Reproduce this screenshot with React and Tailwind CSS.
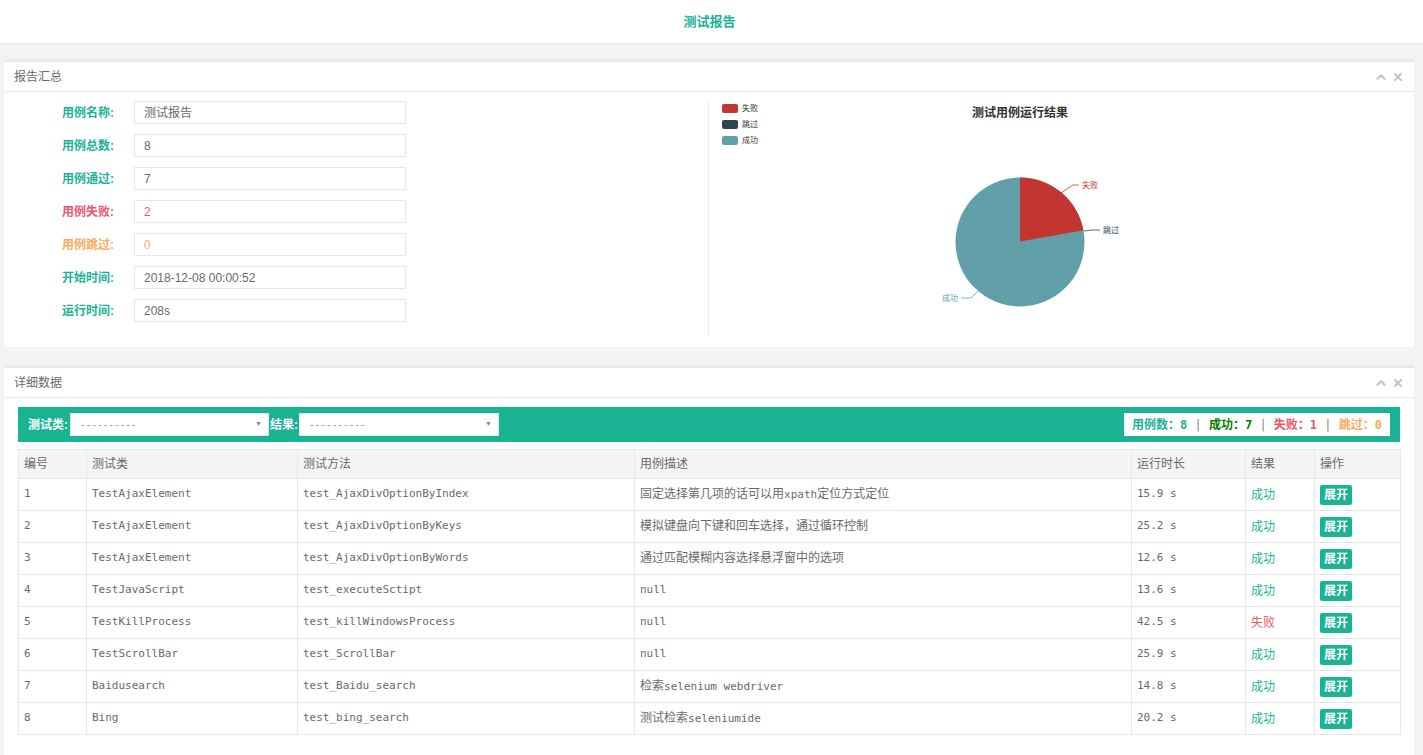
import { ChevronUp, X } from 'lucide-react';

const rows = [
  ['1', 'TestAjaxElement', 'test_AjaxDivOptionByIndex', '固定选择第几项的话可以用xpath定位方式定位', '15.9 s', '成功'],
  ['2', 'TestAjaxElement', 'test_AjaxDivOptionByKeys', '模拟键盘向下键和回车选择，通过循环控制', '25.2 s', '成功'],
  ['3', 'TestAjaxElement', 'test_AjaxDivOptionByWords', '通过匹配模糊内容选择悬浮窗中的选项', '12.6 s', '成功'],
  ['4', 'TestJavaScript', 'test_executeSctipt', 'null', '13.6 s', '成功'],
  ['5', 'TestKillProcess', 'test_killWindowsProcess', 'null', '42.5 s', '失败'],
  ['6', 'TestScrollBar', 'test_ScrollBar', 'null', '25.9 s', '成功'],
  ['7', 'Baidusearch', 'test_Baidu_search', '检索selenium webdriver', '14.8 s', '成功'],
  ['8', 'Bing', 'test_bing_search', '测试检索seleniumide', '20.2 s', '成功'],
];

const fields = [
  ['用例名称:', '测试报告', 'text-[#1ab394]', 'text-[#676a6c]'],
  ['用例总数:', '8', 'text-[#1ab394]', 'text-[#676a6c]'],
  ['用例通过:', '7', 'text-[#1ab394]', 'text-[#676a6c]'],
  ['用例失败:', '2', 'text-[#ed5565]', 'text-[#ed5565]'],
  ['用例跳过:', '0', 'text-[#f8ac59]', 'text-[#f8ac59]'],
  ['开始时间:', '2018-12-08 00:00:52', 'text-[#1ab394]', 'text-[#676a6c]'],
  ['运行时间:', '208s', 'text-[#1ab394]', 'text-[#676a6c]'],
];

const sans = "font-['Liberation_Sans','Noto_Sans_CJK_SC',sans-serif]";
const mono = "font-['DejaVu_Sans_Mono','Noto_Sans_CJK_SC',monospace]";

// CJK runs at 12px, latin runs at 11px mono
function Desc({ text }) {
  return text.split(/([\u4e00-\u9fff\uff0c]+)/).filter(Boolean).map((part, i) =>
    /[\u4e00-\u9fff\uff0c]/.test(part)
      ? <span key={i} className="text-[12px]">{part}</span>
      : <span key={i} className="text-[11px]">{part}</span>
  );
}

function PanelHeader({ title }) {
  return (
    <div className="h-[30px] flex items-center justify-between px-[10px] border-b border-[#e7eaec]">
      <span className="text-[12px] text-[#676a6c]">{title}</span>
      <div className="flex items-center gap-[4px] text-[#c4c4c4]">
        <ChevronUp size={14} strokeWidth={4} />
        <X size={12} strokeWidth={4} />
      </div>
    </div>
  );
}

function PieChart() {
  // 2 fail / 0 skip / 7 pass -> fail slice 80deg
  return (
    <svg width="705" height="245" className="block">
      <g transform="translate(0,-5)">
        {[['#c23531', '失败'], ['#2f4554', '跳过'], ['#61a0a8', '成功']].map(([c, t], i) => (
          <g key={t}>
            <rect x="13" y={8 + i * 16} width="16" height="9" rx="2" fill={c} />
            <text x="33" y={15 + i * 16} fontSize="8" fill="#333">{t}</text>
          </g>
        ))}
        <text x="311" y="21" fontSize="12" fontWeight="bold" fill="#333" textAnchor="middle">测试用例运行结果</text>
        <circle cx="311" cy="146" r="64.5" fill="#61a0a8" />
        <path d="M311 146 L311 81.5 A64.5 64.5 0 0 1 374.5 134.8 Z" fill="#c23531" />
        <line x1="311" y1="146" x2="374.5" y2="134.8" stroke="#61a0a8" strokeWidth="1" />
        <polyline points="352,97 364,89 370,89" fill="none" stroke="#c23531" strokeWidth="0.8" />
        <text x="373" y="92" fontSize="8" fill="#c23531">失败</text>
        <polyline points="375,135 383,134 391,134" fill="none" stroke="#2f4554" strokeWidth="0.8" />
        <text x="394" y="137" fontSize="8" fill="#2f4554">跳过</text>
        <polyline points="269,195 262,202 252,202" fill="none" stroke="#61a0a8" strokeWidth="0.8" />
        <text x="249" y="205" fontSize="8" fill="#61a0a8" textAnchor="end">成功</text>
      </g>
    </svg>
  );
}

function SelectBox({ width }) {
  return (
    <div className={`${width} h-[23px] bg-white border border-[#e5e6e7] flex items-center justify-between pl-[10px] pr-[6px]`}>
      <span className="text-[11px] text-[#999] tracking-[2px]">----------</span>
      <span className="text-[7px] text-[#888]">▼</span>
    </div>
  );
}

export default function App() {
  return (
    <div className={`${sans} bg-[#f3f3f4] min-h-[755px] text-[#676a6c]`}>
      <div className="h-[44px] bg-white border-b border-[#e7eaec] flex items-center justify-center">
        <span className="text-[13px] font-bold text-[#1ab394] -ml-[4px]">测试报告</span>
      </div>

      <div className="ml-[4px] mr-[9px] pt-[15px]">
        <div className="bg-white border-t-[3px] border-[#e7eaec]">
          <PanelHeader title="报告汇总" />
          <div className="flex pt-[9px] h-[255px]">
            <div className="w-[704px] flex flex-col gap-[10px]">
              {fields.map(([label, value, lc, vc]) => (
                <div key={label} className="flex items-center">
                  <div className={`w-[110px] text-right text-[12px] font-bold ${lc}`}>{label}</div>
                  <div className={`ml-[20px] w-[272px] h-[23px] border border-[#e5e6e7] flex items-center pl-[9px] text-[12px] ${vc}`}>
                    {value}
                  </div>
                </div>
              ))}
            </div>
            <div className="border-l border-[#e7eaec] h-[234px]">
              <PieChart />
            </div>
          </div>
        </div>

        <div className="mt-[18px] bg-white border-t-[3px] border-[#e7eaec] pb-[30px]">
          <PanelHeader title="详细数据" />
          <div className="px-[14px] pt-[9px]">
            <div className="h-[35px] bg-[#1ab394] flex items-center pl-[10px] pr-[10px]">
              <span className="text-[12px] font-bold text-white">测试类:</span>
              <div className="ml-[2px]">
                <SelectBox width="w-[199px]" />
              </div>
              <span className="ml-[1px] text-[12px] font-bold text-white">结果:</span>
              <div className="ml-[1px]">
                <SelectBox width="w-[200px]" />
              </div>
              <div className={`ml-auto h-[23px] bg-white px-[8px] flex items-center text-[12px] font-bold whitespace-pre ${mono}`}>
                <span className="text-[#1ab394]">用例数：8</span>
                <span className="text-[#888] font-normal"> | </span>
                <span className="text-[#008000]">成功：7</span>
                <span className="text-[#888] font-normal"> | </span>
                <span className="text-[#ed5565]">失败：1</span>
                <span className="text-[#888] font-normal"> | </span>
                <span className="text-[#f8ac59]">跳过：0</span>
              </div>
            </div>

            <table className="mt-[7px] w-[1382px] border-collapse table-fixed text-[12px]">
              <colgroup>
                <col className="w-[68px]" />
                <col className="w-[211px]" />
                <col className="w-[337px]" />
                <col className="w-[497px]" />
                <col className="w-[114px]" />
                <col className="w-[69px]" />
                <col className="w-[86px]" />
              </colgroup>
              <thead>
                <tr className="h-[29px] bg-[#f5f5f6]">
                  {['编号', '测试类', '测试方法', '用例描述', '运行时长', '结果', '操作'].map((h) => (
                    <th key={h} className="border border-[#e7e7e7] text-left font-normal px-[5px] text-[#676a6c]">{h}</th>
                  ))}
                </tr>
              </thead>
              <tbody>
                {rows.map((r) => (
                  <tr key={r[0]} className="h-[32px]">
                    <td className={`border border-[#e7e7e7] px-[5px] text-[11px] ${mono}`}>{r[0]}</td>
                    <td className={`border border-[#e7e7e7] px-[5px] text-[11px] ${mono}`}>{r[1]}</td>
                    <td className={`border border-[#e7e7e7] px-[5px] text-[11px] ${mono}`}>{r[2]}</td>
                    <td className={`border border-[#e7e7e7] px-[5px] text-[11px] ${mono}`}>
                      <Desc text={r[3]} />
                    </td>
                    <td className={`border border-[#e7e7e7] px-[5px] text-[11px] ${mono}`}>{r[4]}</td>
                    <td className={`border border-[#e7e7e7] px-[5px] text-[12px] ${r[5] === '成功' ? 'text-[#1ab394]' : 'text-[#ed5565]'}`}>{r[5]}</td>
                    <td className="border border-[#e7e7e7] px-[5px]">
                      <span className="inline-flex items-center justify-center w-[32px] h-[20px] rounded-[2px] bg-[#1ab394] text-white text-[12px] font-bold">展开</span>
                    </td>
                  </tr>
                ))}
              </tbody>
            </table>
          </div>
        </div>
      </div>
    </div>
  );
}
